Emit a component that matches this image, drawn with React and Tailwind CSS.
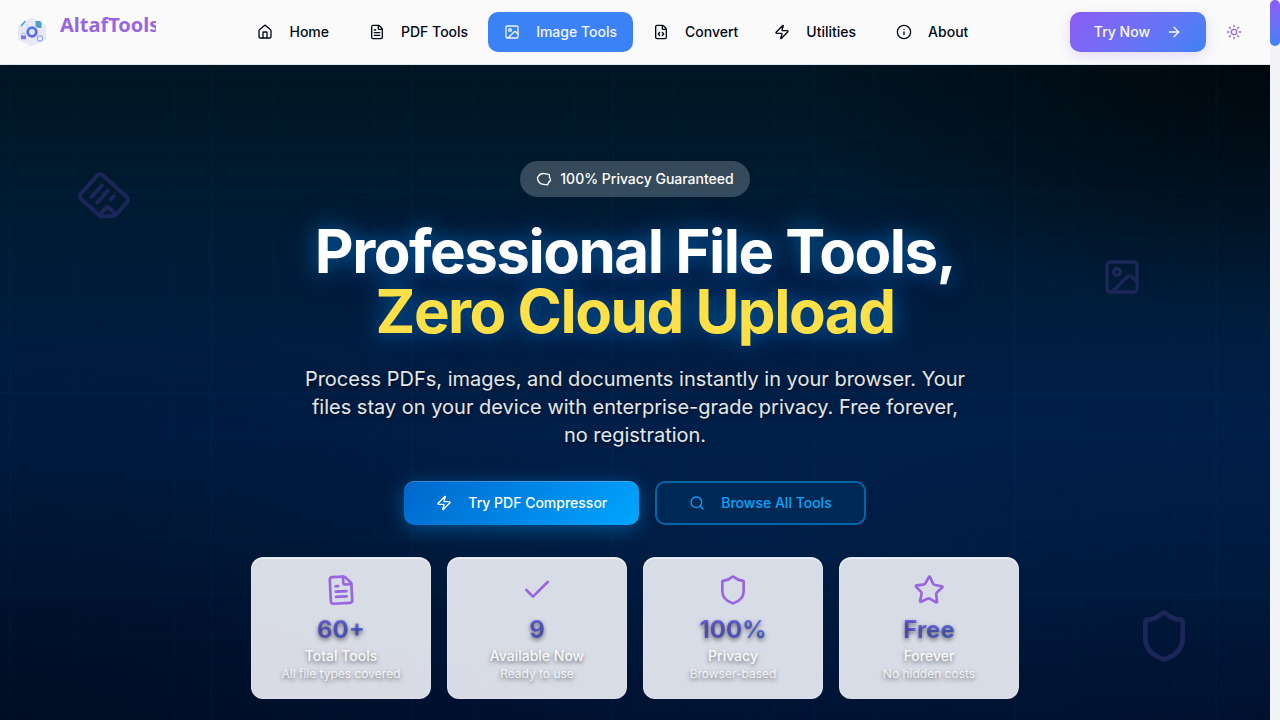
import React from "react";
import {
  ArrowRight,
  Check,
  FileCode,
  FileText,
  House,
  Image as ImageIcon,
  Info,
  Search,
  Shield,
  Star,
  Sun,
  Zap,
} from "lucide-react";

const navItems = [
  { label: "Home", icon: House, className: "mx-1 text-[#020817]" },
  { label: "PDF Tools", icon: FileText, className: "text-[#020817]" },
  { label: "Image Tools", icon: ImageIcon, className: "bg-[#3b82f6] text-[#f1f5ff]" },
  { label: "Convert", icon: FileCode, className: "text-[#020817]" },
  { label: "Utilities", icon: Zap, className: "text-[#020817]" },
  { label: "About", icon: Info, className: "mx-1 text-[#020817]" },
];

const stats = [
  { value: "60+", label: "Total Tools", note: "All file types covered", icon: FileText, tilt: "-rotate-3" },
  { value: "9", label: "Available Now", note: "Ready to use", icon: Check, tilt: "" },
  { value: "100%", label: "Privacy", note: "Browser-based", icon: Shield, tilt: "" },
  { value: "Free", label: "Forever", note: "No hidden costs", icon: Star, tilt: "rotate-2" },
];

function Logo() {
  return (
    <a href="#home" className="flex h-8 w-[140px] shrink-0 items-start gap-3 overflow-hidden">
      <svg viewBox="0 0 32 32" className="size-8 shrink-0" aria-hidden="true">
        <defs>
          <linearGradient id="gear" x1="0" y1="0" x2="1" y2="1">
            <stop offset="0" stopColor="#4f7df0" />
            <stop offset="1" stopColor="#6a5cf5" />
          </linearGradient>
        </defs>
        <path d="M16 1.5 30 9v14.500L16 30.500 2 23.500V9Z" fill="#e8e9f7" />
        <path d="M5.500 9.500 9 5.500" stroke="#4a9cc4" strokeWidth="1.400" strokeLinecap="round" />
        <path d="m10 8 3 3.500" stroke="#c3c9ee" strokeWidth="0.800" />
        <path d="M19.500 5h4.500l1.500 1.500V12h-3l-3-1.500Z" fill="#4c9fcb" />
        <circle cx="16" cy="16" r="4.300" fill="#dfe6fd" stroke="url(#gear)" strokeWidth="2.800" />
        <rect x="5" y="19.500" width="5" height="3.800" rx="0.600" fill="#7079f0" />
        <path d="M6 19.500v-1a1.500 1.500 0 0 1 3 0v1" fill="none" stroke="#a5a4ee" strokeWidth="0.800" />
        <circle cx="24" cy="22.500" r="2.600" fill="#eff3ff" stroke="#8ca8f4" strokeWidth="1.100" />
      </svg>
      <span className="font-['Noto_Sans',sans-serif] text-xl leading-[18px] font-bold text-[#9866e0]">AltafTools</span>
    </a>
  );
}

function Header() {
  return (
    <header className="flex h-[65px] items-center justify-between border-b border-[#e2e8f0] bg-[#fafafa] px-4">
      <Logo />
      <nav aria-label="Main" className="flex items-center gap-1">
        {navItems.map(({ label, icon: Icon, className }) => (
          <button
            key={label}
            type="button"
            className={`flex h-10 items-center gap-4 rounded-[10px] px-4 text-sm font-medium whitespace-nowrap ${className}`}
          >
            <Icon size={16} />
            {label}
          </button>
        ))}
      </nav>
      <div className="flex items-center gap-2">
        <button
          type="button"
          className="flex h-10 items-center gap-4 rounded-[10px] bg-linear-135 from-[#8b5cf6] to-[#3b82f6] px-6 text-sm font-medium whitespace-nowrap text-[#f8fafc] shadow-[0_4px_14px_rgba(139,92,246,0.2)]"
        >
          Try Now
          <ArrowRight size={16} />
        </button>
        <button type="button" aria-label="Toggle theme" className="flex size-10 items-center justify-center text-[#9866e0]">
          <Sun size={16} />
        </button>
      </div>
    </header>
  );
}

function Backdrop() {
  return (
    <div aria-hidden="true" className="absolute inset-0 overflow-hidden text-[#1c2659]">
      <div className="absolute inset-0 bg-[radial-gradient(ellipse_at_100%_0%,rgba(0,6,11,0.9)_0%,rgba(0,12,22,0)_27%),radial-gradient(ellipse_at_0%_100%,rgba(0,10,28,0.75)_0%,rgba(0,10,28,0)_45%),radial-gradient(ellipse_at_100%_100%,rgba(0,14,38,0.4)_0%,rgba(0,14,38,0)_35%),linear-gradient(180deg,#001522_0%,#001b32_22%,#001f4a_56%,#001e46_75%,#001336_100%)]" />
      <div className="absolute inset-0 bg-[linear-gradient(90deg,rgba(0,110,190,0.04)_2px,transparent_2px),linear-gradient(rgba(0,110,190,0.04)_2px,transparent_2px)] bg-size-[201px_201px] bg-position-[9px_-75px]" />
      <div className="absolute inset-0 bg-[linear-gradient(90deg,rgba(0,110,190,0.02)_2px,transparent_2px),linear-gradient(rgba(0,110,190,0.02)_2px,transparent_2px)] bg-size-[100px_100px] bg-position-[73px_-28px]" />
      <FileText size={48} className="absolute top-[109px] left-20 rotate-[132deg]" />
      <ImageIcon size={40} className="absolute top-48 right-32" />
      <Shield size={56} className="absolute right-[78px] bottom-14" />
    </div>
  );
}

function StatCard({ value, label, note, icon: Icon, tilt }) {
  return (
    <div className="flex flex-col items-center rounded-xl border border-white/20 bg-[#e4e7ef]/95 p-4 text-center shadow-[inset_0_1px_0_rgba(255,255,255,0.6)]">
      <Icon size={32} className={`mb-2 text-[#9866e0] ${tilt}`} />
      <div className="w-full bg-linear-135 from-[#8b5cf6] to-[#3b82f6] bg-clip-text text-2xl leading-8 font-bold text-transparent [text-shadow:0_2px_4px_rgba(0,0,0,0.5)]">
        {value}
      </div>
      <div className="text-sm leading-5 font-medium text-white/90 [text-shadow:0_2px_4px_rgba(0,0,0,0.5)]">{label}</div>
      <div className="text-xs leading-4 text-white/80 [text-shadow:0_2px_4px_rgba(0,0,0,0.5)]">{note}</div>
    </div>
  );
}

function Hero() {
  return (
    <main className="relative flex-1 bg-[#001b3a]">
      <Backdrop />
      <div className="relative flex flex-col items-center px-4 pt-24 pb-5 text-center">
        <div className="flex items-center gap-2 rounded-full bg-[#f0f4ff]/22 px-4 py-2 text-sm leading-5 font-medium text-white">
          <Shield size={16} className="rotate-[100deg]" />
          100% Privacy Guaranteed
        </div>
        <h1 className="mt-6 text-6xl leading-none font-bold tracking-tight text-white [text-shadow:0_0_20px_rgba(0,150,255,0.5),0_0_40px_rgba(0,120,220,0.3)]">
          Professional File Tools,
          <span className="block text-[#fde047]">Zero Cloud Upload</span>
        </h1>
        <p className="mt-6 max-w-2xl text-xl leading-7 text-white/90 [text-shadow:0_2px_4px_rgba(0,0,0,0.5)]">
          Process PDFs, images, and documents instantly in your browser. Your files stay on your device with
          enterprise-grade privacy. Free forever, no registration.
        </p>
        <div className="mt-8 flex gap-4 text-sm font-medium">
          <button
            type="button"
            className="flex h-11 items-center gap-4 rounded-[10px] bg-linear-135 from-[#0066cc] to-[#00a6ff] px-8 text-white shadow-[0_4px_20px_rgba(0,166,255,0.4),inset_0_1px_0_rgba(255,255,255,0.2)]"
          >
            <Zap size={16} />
            Try PDF Compressor
          </button>
          <button
            type="button"
            className="flex h-11 items-center gap-4 rounded-[10px] border-2 border-[#0066a8] bg-[#002855] px-8 text-[#00a6ff]"
          >
            <Search size={16} />
            Browse All Tools
          </button>
        </div>
        <div className="mt-8 grid w-full max-w-3xl grid-cols-4 gap-4">
          {stats.map((stat) => (
            <StatCard key={stat.label} {...stat} />
          ))}
        </div>
      </div>
    </main>
  );
}

export default function App() {
  return (
    <div className="flex min-h-screen font-['Inter',sans-serif]">
      <div className="flex min-w-0 flex-1 flex-col">
        <Header />
        <Hero />
      </div>
      <div aria-hidden="true" className="w-2.5 shrink-0 bg-[#f1f3f7]">
        <div className="h-[46px] rounded-full bg-linear-to-b from-[#8b5cf6] to-[#3b82f6]" />
      </div>
    </div>
  );
}
